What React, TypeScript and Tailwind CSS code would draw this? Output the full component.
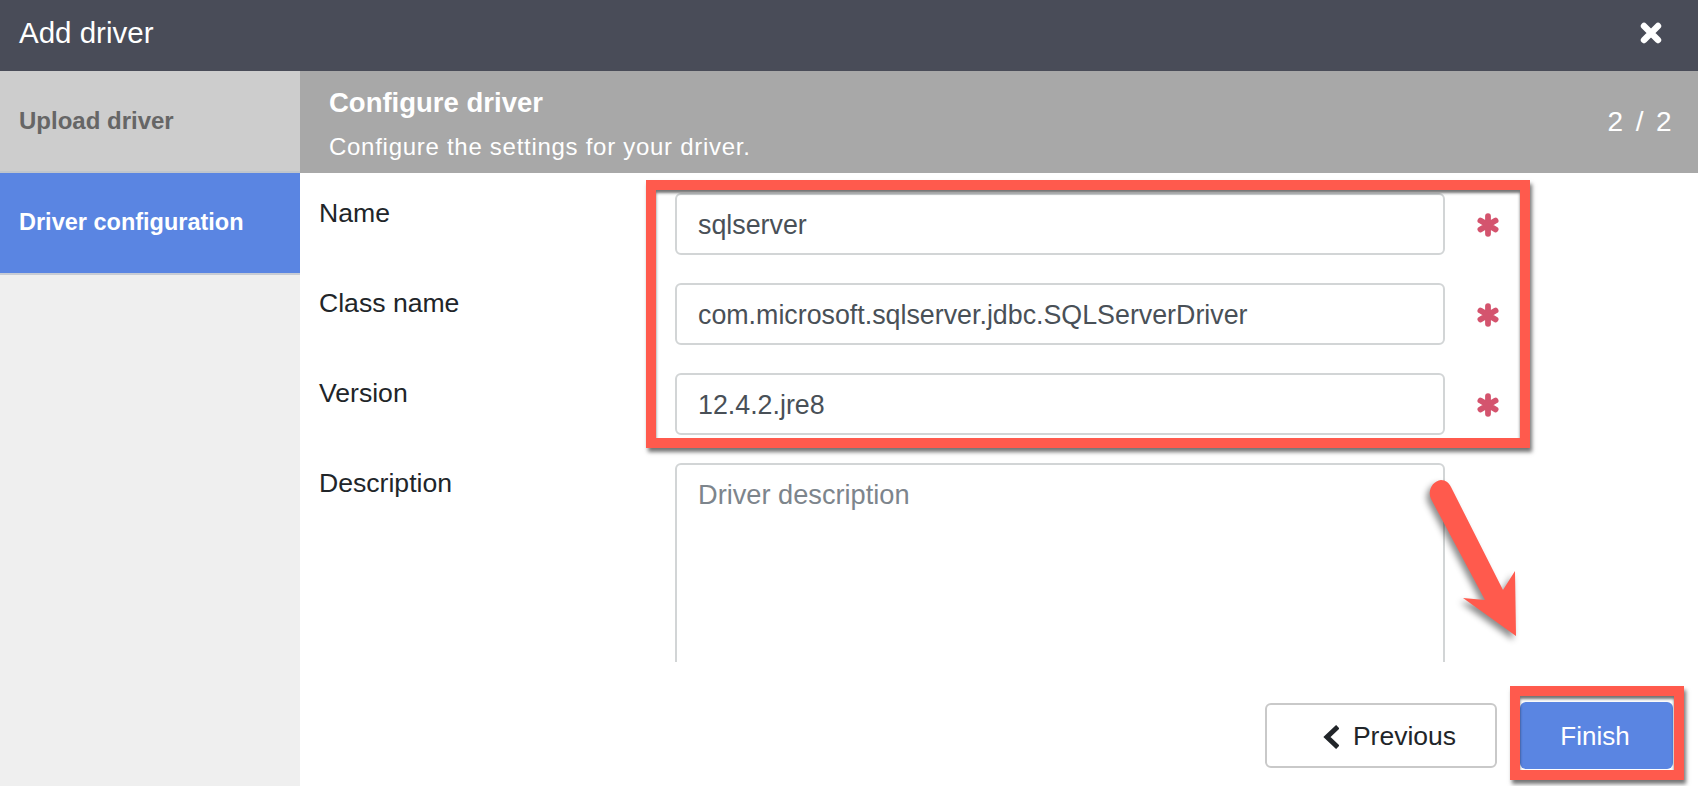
const fields = [
  { label: "Name", value: "sqlserver" },
  { label: "Class name", value: "com.microsoft.sqlserver.jdbc.SQLServerDriver" },
  { label: "Version", value: "12.4.2.jre8" },
];

function Star() {
  return (
    <svg className="ml-[31px] mt-[20px] h-[24px] w-[24px] text-[#d4546e]" viewBox="0 0 24 24" fill="none" stroke="currentColor" strokeWidth="5.8" strokeLinecap="round">
      <path d="M12 3.2V20.8M4.4 7.6L19.6 16.4M19.6 7.6L4.4 16.4" />
    </svg>
  );
}

export default function App() {
  return (
    <div className="relative flex h-[786px] w-[1698px] flex-col overflow-hidden bg-white font-['Liberation_Sans',sans-serif] text-[#212529]">
      <header className="flex h-[71px] items-center justify-between bg-[#494c58] pb-[6px] pl-[19px] pr-[36px] text-white">
        <h1 className="text-[29.5px] font-normal leading-none">Add driver</h1>
        <svg className="h-[22px] w-[22px]" viewBox="0 0 22 22" fill="none" stroke="currentColor" strokeWidth="6.4" strokeLinecap="round">
          <path d="M4 4L18 18M18 4L4 18" />
        </svg>
      </header>

      <div className="flex min-h-0 flex-1">
        <aside className="w-[300px] shrink-0 bg-[#efefef]">
          <div className="flex h-[102px] items-center border-b-2 border-[#bfc5cc] bg-[#cdcdcd] pl-[19px] text-[24px] font-bold text-[#666666]">
            Upload driver
          </div>
          <div className="flex h-[102px] items-center border-b-2 border-[#c8ccd4] bg-[#5a85e2] pl-[19px] text-[23.5px] font-bold text-white">
            Driver configuration
          </div>
        </aside>

        <main className="flex min-w-0 flex-1 flex-col">
          <div className="flex h-[102px] shrink-0 items-center justify-between bg-[#a8a8a8] pl-[29px] pr-[24px] text-white">
            <div className="pt-[4px]">
              <div className="text-[27.5px] font-bold leading-[30px]">Configure driver</div>
              <div className="mt-[16px] text-[24px] leading-[26px] tracking-[0.72px]">Configure the settings for your driver.</div>
            </div>
            <div className="text-[28px] tracking-[2.4px]">2 / 2</div>
          </div>

          <div className="h-[489px] shrink-0 overflow-hidden pl-[19px] pt-5">
            {fields.map((f) => (
              <div key={f.label} className="mb-7 flex h-[62px]">
                <label className="w-[356px] shrink-0 text-[26.6px] leading-[40px]">{f.label}</label>
                <div className="flex h-[62px] w-[770px] items-center rounded-md border-2 border-[#d2d5d6] pl-[21px] pt-[2px] text-[26.8px] text-[#495057]">
                  {f.value}
                </div>
                <Star />
              </div>
            ))}
            <div className="flex">
              <label className="w-[356px] shrink-0 text-[26.6px] leading-[40px]">Description</label>
              <div className="h-[260px] w-[770px] rounded-md border-2 border-[#d2d5d6] pl-[21px] pt-[12px] text-[27.2px] leading-[36px] text-[#7d858c]">
                Driver description
              </div>
            </div>
          </div>

          <div className="flex flex-1 items-start justify-end gap-[23px] pr-[25px] pt-[41px]">
            <button className="flex h-[65px] w-[232px] items-center justify-center gap-[14px] rounded-md border-2 border-[#c9c9c9] bg-white pl-[17px] pt-[2px] text-[26.5px] text-[#212529]">
              <svg className="h-[24px] w-[16px]" viewBox="0 0 16 24" fill="none" stroke="currentColor" strokeWidth="5" strokeLinecap="square">
                <path d="M13 3.5L4 12L13 20.5" />
              </svg>
              Previous
            </button>
            <button className="-mt-px h-[67px] w-[153px] rounded-md bg-[#5a85e2] pr-[3px] pt-[1px] text-[26px] text-white">Finish</button>
          </div>
        </main>
      </div>

      <div className="absolute left-[646px] top-[180px] h-[268px] w-[884px] border-[10px] border-[#ff5a4d] shadow-[2px_4px_4px_rgba(0,0,0,0.55),inset_0_3px_3px_rgba(0,0,0,0.55)]" />
      <div className="absolute left-[1510px] top-[686px] h-[94px] w-[174px] border-[10px] border-[#ff5a4d] shadow-[2px_4px_4px_rgba(0,0,0,0.55),inset_0_3px_3px_rgba(0,0,0,0.55)]" />
      <svg
        className="absolute left-[1420px] top-[470px] h-[180px] w-[110px] drop-shadow-[-3px_4px_3px_rgba(0,0,0,0.45)]"
        viewBox="1420 470 110 180"
      >
        <path
          fill="#ff5a4d"
          d="M1431 499C1427 490 1433 481 1441 480C1446 480 1449 483 1451 487L1503 590L1515 571L1516 636L1463 598L1485 600Z"
        />
      </svg>
    </div>
  );
}
